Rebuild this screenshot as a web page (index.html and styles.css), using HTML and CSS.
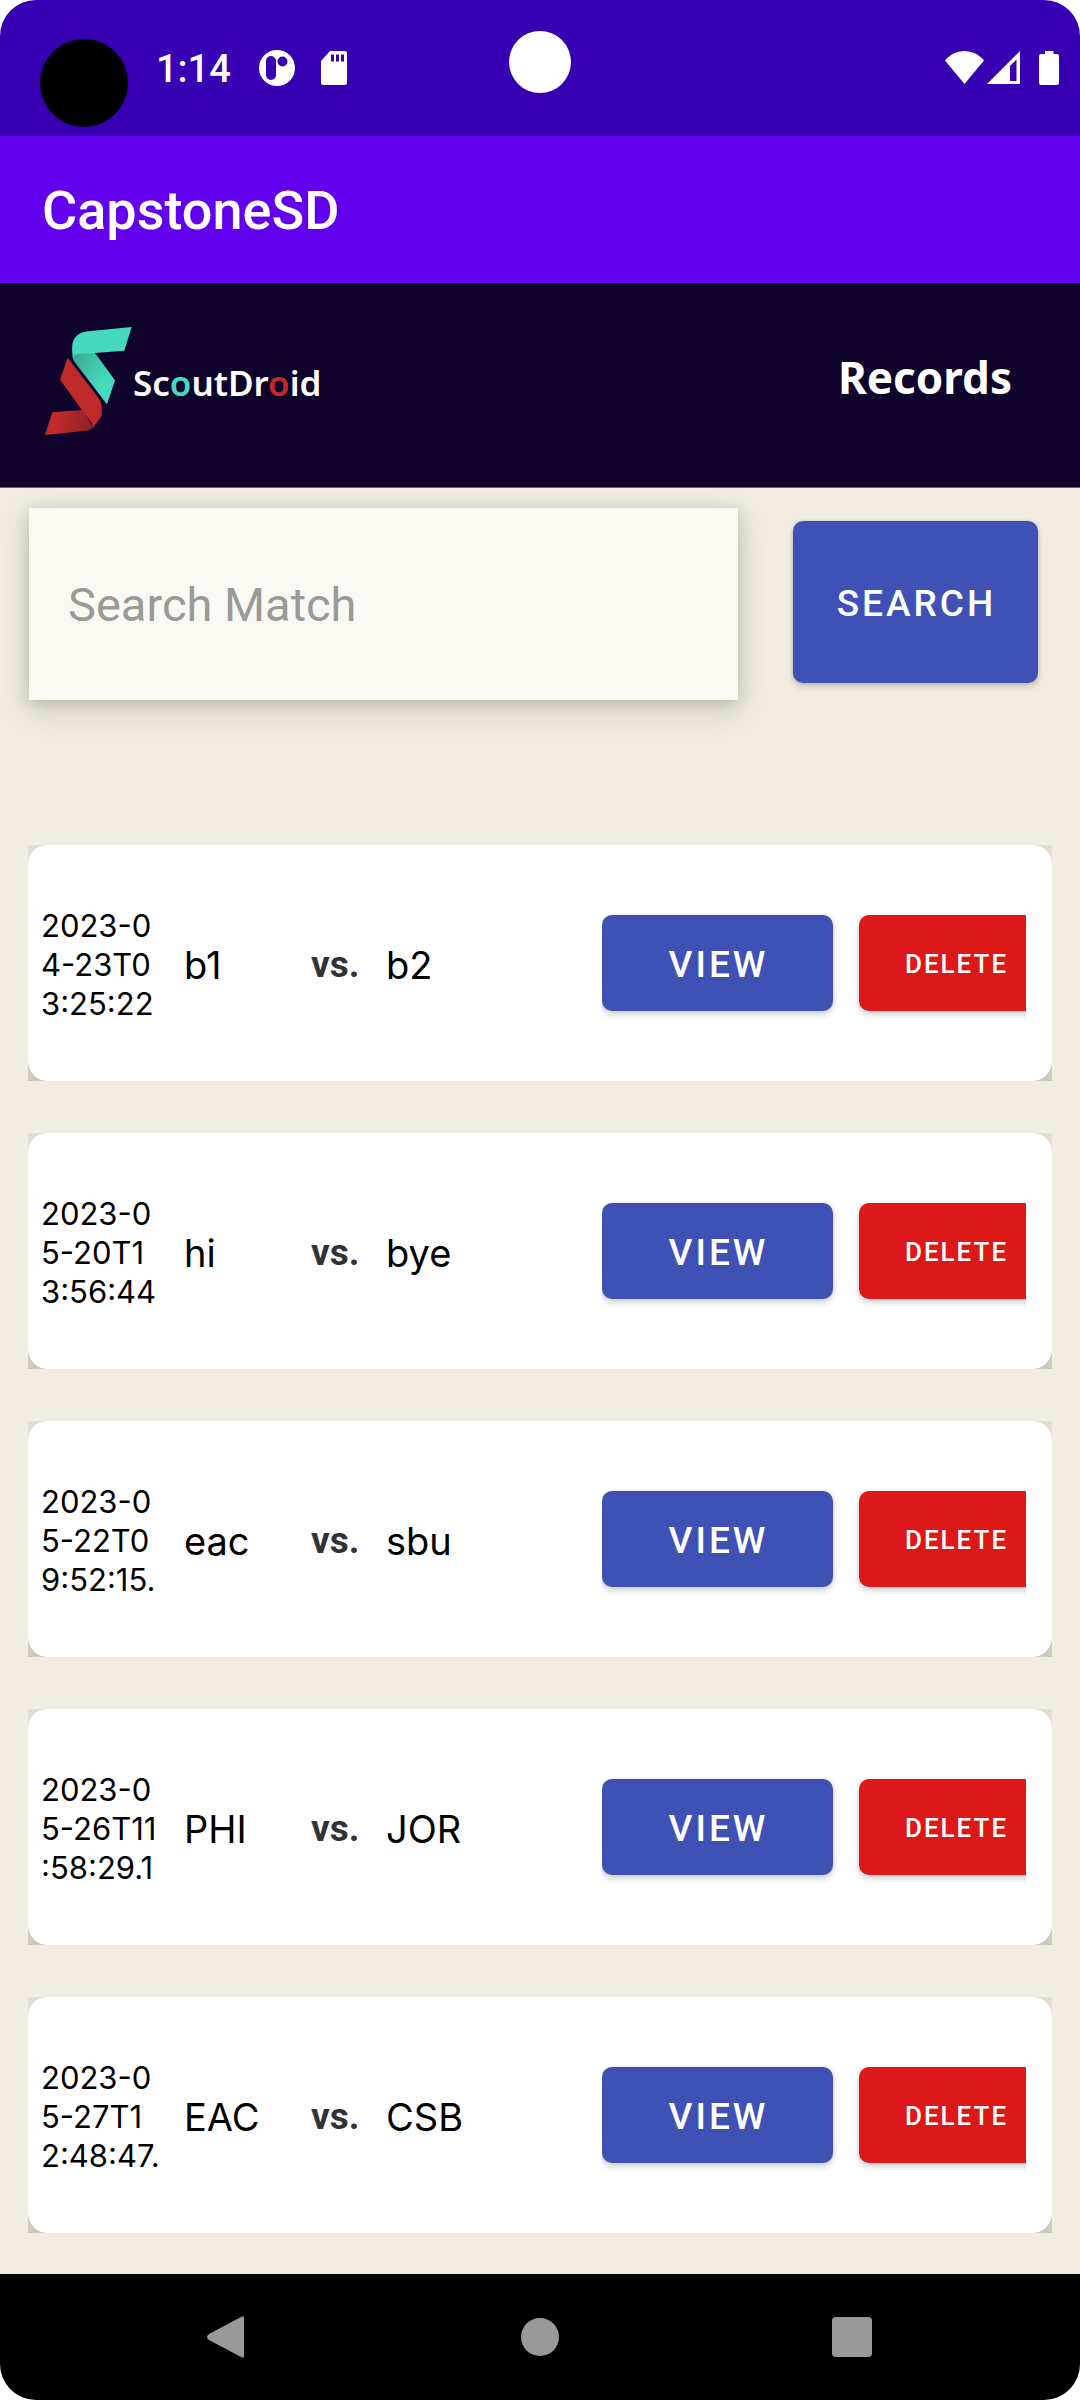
FILE: index.html
```html
<!DOCTYPE html>
<html lang="en">
<head>
<meta charset="utf-8">
<meta name="viewport" content="width=device-width, initial-scale=1">
<title>CapstoneSD</title>
<link rel="stylesheet" href="styles.css">
</head>
<body>
<div class="screen">
  <div class="status-bar">
    <span class="touch-dot"></span>
    <span class="clock">1:14</span>
    <svg class="status-icon" width="36" height="36" viewBox="0 0 36 36" aria-hidden="true">
      <circle cx="18" cy="18" r="18" fill="#fff"/>
      <rect x="7" y="6" width="10" height="24" rx="5" fill="#3700b3"/>
      <circle cx="23.500" cy="11.500" r="5" fill="#3700b3"/>
    </svg>
    <svg class="status-icon sd-icon" width="28" height="34" viewBox="0 0 28 34" aria-hidden="true">
      <path d="M10 0H25a2 2 0 0 1 2 2V32a2 2 0 0 1-2 2H3a2 2 0 0 1-2-2V10Z" fill="#fff"/>
      <path d="M11 3.500h3v7h-3zM16 3.500h3v7h-3zM21 3.500h3v7h-3z" fill="#3700b3"/>
    </svg>
    <span class="camera"></span>
    <span class="signals">
      <svg width="39" height="33" viewBox="0 0 39 33" aria-hidden="true"><path d="M19.500 33 0 9.500C5 3.500 12 0 19.500 0S34 3.500 39 9.500Z" fill="#fff"/></svg>
      <svg width="33" height="33" viewBox="0 0 33 33" aria-hidden="true"><path fill-rule="evenodd" d="M33 0V33H0ZM29.500 8.500 23 15V30H29.500Z" fill="#fff"/></svg>
      <svg class="battery" width="20" height="34" viewBox="0 0 20 34" aria-hidden="true"><path d="M6 0h8.500v3H18a2 2 0 0 1 2 2V32a2 2 0 0 1-2 2H2a2 2 0 0 1-2-2V5a2 2 0 0 1 2-2h4Z" fill="#fff"/></svg>
    </span>
  </div>

  <div class="app-bar"><h1 class="app-title">CapstoneSD</h1></div>

  <header class="brand-bar">
    <div class="brand">
      <svg class="brand-mark" width="88" height="108" viewBox="0 0 264 324" aria-hidden="true">
        <defs>
          <linearGradient id="teal-fold" x1="0" y1="0" x2="0.700" y2="0.600"><stop offset="0" stop-color="#38a890"/><stop offset="1" stop-color="#45dabd"/></linearGradient>
          <linearGradient id="red-fold" x1="0" y1="0" x2="1" y2="0.100"><stop offset="0.300" stop-color="#c12a2b"/><stop offset="1" stop-color="#8f2226"/></linearGradient>
        </defs>
        <path d="M84 82 Q118 76 150 78L210 160 186 232 88 104Q80 92 84 82Z" fill="url(#teal-fold)"/>
        <path d="M260 0 238 71 150 78 96 82Q84 84 85 96 80 80 82 52 88 17 130 13Z" fill="#45dabd"/>
        <path d="M22 256 112 249 144 300Q138 310 124 311L0 324Z" fill="url(#red-fold)"/>
        <path d="M68 92 160 212Q172 228 170 250V266L144 303 141 290 45 158Z" fill="#c12a2b"/>
      </svg>
      <span class="brand-name">Sc<span class="teal">o</span>utDr<span class="red">o</span>id</span>
    </div>
    <h2 class="page-title">Records</h2>
  </header>

  <main class="content">
    <form class="search">
      <input class="search-input" type="text" placeholder="Search Match" aria-label="Search Match">
      <button class="btn search-btn" type="button">SEARCH</button>
    </form>

    <ul class="records">
      <li class="slot"><article class="record">
        <time class="date">2023-0<br>4-23T0<br>3:25:22</time>
        <span class="team">b1</span><span class="versus">vs.</span><span class="team">b2</span>
        <div class="actions"><button class="btn view" type="button">VIEW</button><button class="btn delete" type="button">DELETE</button></div>
      </article></li>
      <li class="slot"><article class="record">
        <time class="date">2023-0<br>5-20T1<br>3:56:44</time>
        <span class="team">hi</span><span class="versus">vs.</span><span class="team">bye</span>
        <div class="actions"><button class="btn view" type="button">VIEW</button><button class="btn delete" type="button">DELETE</button></div>
      </article></li>
      <li class="slot"><article class="record">
        <time class="date">2023-0<br>5-22T0<br>9:52:15.</time>
        <span class="team">eac</span><span class="versus">vs.</span><span class="team">sbu</span>
        <div class="actions"><button class="btn view" type="button">VIEW</button><button class="btn delete" type="button">DELETE</button></div>
      </article></li>
      <li class="slot"><article class="record">
        <time class="date">2023-0<br>5-26T11<br>:58:29.1</time>
        <span class="team">PHI</span><span class="versus">vs.</span><span class="team">JOR</span>
        <div class="actions"><button class="btn view" type="button">VIEW</button><button class="btn delete" type="button">DELETE</button></div>
      </article></li>
      <li class="slot"><article class="record">
        <time class="date">2023-0<br>5-27T1<br>2:48:47.</time>
        <span class="team">EAC</span><span class="versus">vs.</span><span class="team">CSB</span>
        <div class="actions"><button class="btn view" type="button">VIEW</button><button class="btn delete" type="button">DELETE</button></div>
      </article></li>
    </ul>
  </main>

  <nav class="nav-bar" aria-label="System">
    <button class="nav-btn" type="button" aria-label="Back"><svg width="44" height="44" viewBox="0 0 44 44"><path d="M37 2Q40 0 40 3V41Q40 44 37 42L5 25Q1 22 5 19Z" fill="#999"/></svg></button>
    <button class="nav-btn" type="button" aria-label="Home"><svg width="44" height="44" viewBox="0 0 44 44"><circle cx="22" cy="22" r="19" fill="#999"/></svg></button>
    <button class="nav-btn" type="button" aria-label="Recent apps"><svg width="44" height="44" viewBox="0 0 44 44"><rect x="0" y="2" width="40" height="40" rx="4" fill="#999"/></svg></button>
  </nav>
</div>
</body>
</html>
```

FILE: styles.css
```css
* { box-sizing: border-box; }

body {
  margin: 0;
  background: #fff;
  font-family: Roboto, "Liberation Sans", sans-serif;
}

.screen {
  display: flex;
  flex-direction: column;
  min-height: 100vh;
  overflow: hidden;
  border-radius: 36px;
  background: #f0ecdf;
}

/* System status bar */
.status-bar {
  position: relative;
  display: flex;
  align-items: center;
  height: 136px;
  padding: 0 21px 0 40px;
  background: #3700b3;
}

.touch-dot {
  width: 88px;
  height: 88px;
  margin-top: 30px;
  border-radius: 50%;
  background: #000;
}

.clock {
  margin-left: 28px;
  padding-top: 2px;
  color: #fff;
  font-size: 38px;
  font-weight: 500;
  line-height: 44px;
}

.status-icon { margin-left: 28px; }
.sd-icon { margin-left: 25px; }

.camera {
  position: absolute;
  top: 31px;
  left: 50%;
  width: 62px;
  height: 62px;
  margin-left: -31px;
  border-radius: 50%;
  background: #fff;
}

.signals {
  display: flex;
  gap: 3px;
  margin-left: auto;
}

.battery { margin-left: 16px; }

/* App and brand bars */
.app-bar {
  display: flex;
  align-items: center;
  height: 147px;
  padding: 2px 42px 0;
  background: #6200ee;
}

.app-title {
  margin: 0;
  color: #fff;
  font-size: 54px;
  font-weight: 500;
  line-height: 64px;
}

.brand-bar {
  display: flex;
  justify-content: space-between;
  height: 205px;
  padding: 44px 68px 0 45px;
  border-bottom: 1px solid #6b6375;
  background: #0f032b;
  color: #fff;
}

.brand {
  display: flex;
  align-items: flex-start;
}

.brand-name {
  margin-top: 32px;
  font-family: "Noto Sans", sans-serif;
  font-size: 35px;
  font-weight: 600;
  line-height: 48px;
}

.teal { color: #45dabd; }
.red { color: #c12a2b; }

.page-title {
  margin: 20px 0 0;
  font-family: "Noto Sans", sans-serif;
  font-size: 44px;
  font-weight: 700;
  line-height: 60px;
}

/* Content */
.content {
  flex: 1;
  padding: 20px 28px 40px;
}

.search {
  display: flex;
  align-items: flex-start;
  gap: 55px;
  padding: 0 14px 0 1px;
}

.search-input {
  flex: 1;
  min-width: 0;
  height: 192px;
  padding: 0 39px;
  border: 0;
  border-radius: 0;
  background: #faf9f4;
  box-shadow: 0 10px 28px rgba(60, 60, 30, 0.2), 0 2px 12px rgba(60, 60, 30, 0.16);
  color: #222;
  font-family: inherit;
  font-size: 47px;
}

.search-input::placeholder {
  color: #9a9996;
  opacity: 1;
}

.btn {
  flex: none;
  padding: 2px 0 0 2px;
  border: 0;
  border-radius: 10px;
  background: #3f51b5;
  box-shadow: 0 4px 6px rgba(0, 0, 0, 0.16), 0 0 4px rgba(0, 0, 0, 0.12);
  color: #fff;
  font-family: inherit;
  font-size: 37px;
  font-weight: 500;
  letter-spacing: 3px;
}

.search-btn {
  width: 245px;
  height: 162px;
  margin-top: 13px;
}

.records {
  display: grid;
  gap: 52px;
  margin: 145px 0 0;
  padding: 0;
  list-style: none;
}

.slot { background: linear-gradient(#e4e1d4, #cdcabc); }

.record {
  display: grid;
  grid-template-columns: 143px 127px 75px 1fr 424px;
  align-items: center;
  height: 236px;
  padding: 0 26px 0 13px;
  border-radius: 20px;
  background: #fff;
}

.date,
.team {
  padding-top: 3px;
  color: #000;
  font-family: Inter, "Liberation Sans", sans-serif;
}

.date {
  font-size: 31px;
  line-height: 39px;
}

.team {
  font-size: 38px;
  line-height: 44px;
}

.versus {
  padding-top: 3px;
  color: #333;
  font-size: 37px;
  font-weight: 700;
  line-height: 44px;
}

.actions {
  display: flex;
  gap: 26px;
  overflow-x: clip;
}

.view {
  width: 231px;
  height: 96px;
}

.delete {
  width: 193px;
  height: 96px;
  background: #dc1818;
  font-size: 26px;
  letter-spacing: 2px;
}

/* System navigation */
.nav-bar {
  display: flex;
  height: 126px;
  padding: 0 69px;
  background: #000;
}

.nav-btn {
  display: flex;
  flex: 1;
  align-items: center;
  justify-content: center;
  padding: 0;
  border: 0;
  background: none;
}
```
